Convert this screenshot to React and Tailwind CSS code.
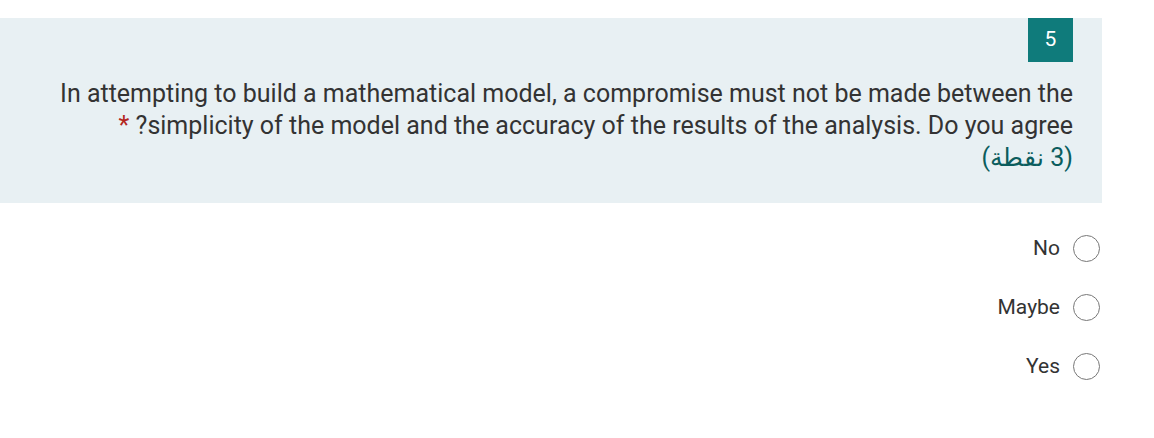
import React from "react";

const options = ["No", "Maybe", "Yes"];

const Radio = () => (
  <span className="w-[27px] h-[27px] rounded-full border-[1.5px] border-[#777777] bg-white shrink-0" />
);

export default function App() {
  return (
    <div
      className="w-[1154px] h-[438px] bg-white pt-[18px]"
      style={{ fontFamily: "Roboto, 'Noto Sans', sans-serif" }}
    >
      {/* question header */}
      <div dir="rtl" className="w-[1102px] bg-[#e8f0f3] pr-[29px] pb-[29px]">
        <div className="flex">
          <div className="w-[45px] h-[44px] bg-[#0f7b7b] text-white text-[21px] flex items-center justify-center">
            5
          </div>
        </div>
        <div className="mt-[16px] text-[25px] leading-[32px] text-[#333333] text-right">
          <div>
            In attempting to build a mathematical model, a compromise must not be made between the
            <br />
            simplicity of the model and the accuracy of the results of the analysis. Do you agree?
            <span className="text-[#b3261e]"> *</span>
          </div>
          <div className="text-[#0b5d5d]">(3 نقطة)</div>
        </div>
      </div>

      {/* answers */}
      <div dir="rtl" className="w-[1102px] pr-[2px] pt-[32px] flex flex-col gap-[32px]">
        {options.map((o) => (
          <label key={o} className="flex items-center gap-[13px] h-[27px]">
            <Radio />
            <span className="text-[21px] text-[#333333]">{o}</span>
          </label>
        ))}
      </div>
    </div>
  );
}
